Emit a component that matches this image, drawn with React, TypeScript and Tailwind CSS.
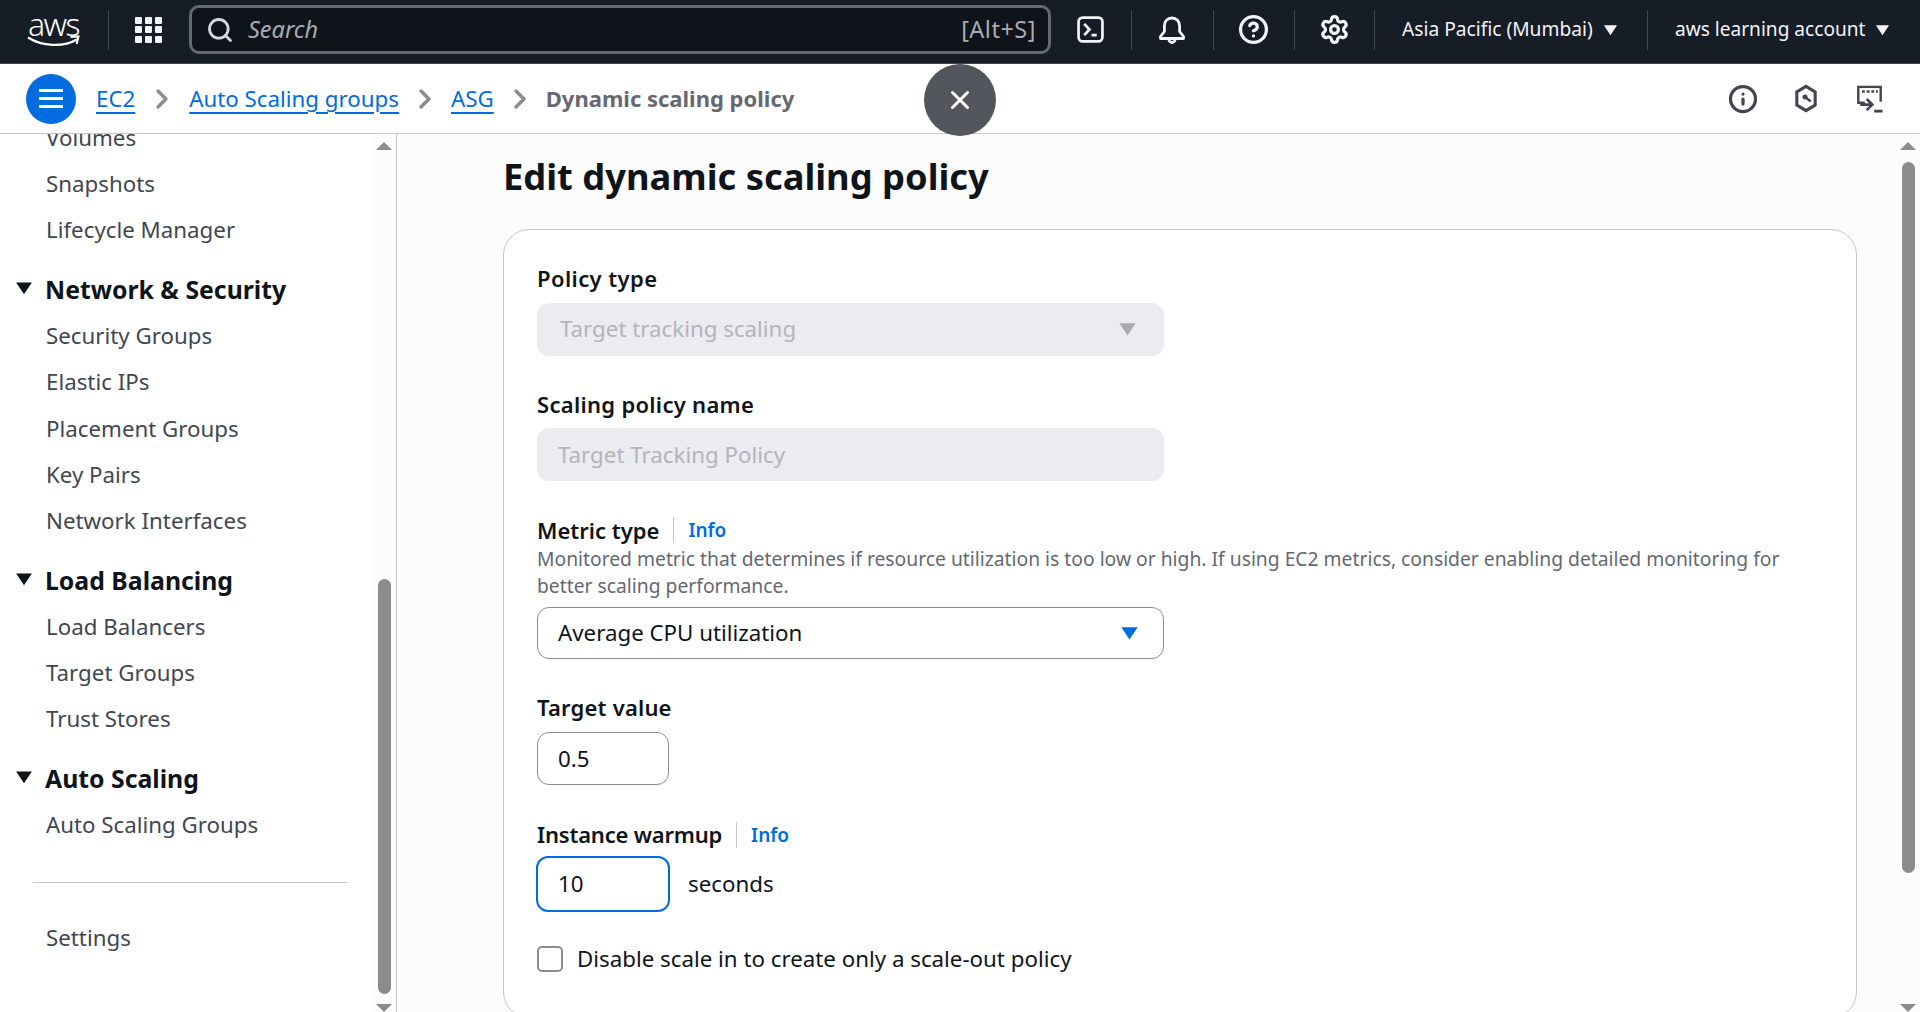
import React from "react";
import { Search, CircleHelp, Settings, Info, ChevronRight, X } from "lucide-react";

const Tri = ({ className }: { className: string }) => (
  <svg viewBox="0 0 16 12" className={className} fill="currentColor"><path d="M1 1h14L8 11.5z" /></svg>
);

const Sep = () => <div className="w-px h-[40px] bg-[#424650] shrink-0" />;

const Crumb = ({ t }: { t: string }) => (
  <a className="text-[#006ce0] underline underline-offset-[5px] decoration-2">{t}</a>
);
const Chev = ({ cls }: { cls: string }) => (
  <ChevronRight size={32} strokeWidth={2.6} className={"text-[#8c8c94] shrink-0 " + cls} />
);

const Item = ({ t, cls = "h-[46px]" }: { t: string; cls?: string }) => (
  <div className={"flex items-center pb-[1px] pl-[46px] text-[#414750] whitespace-nowrap " + cls}>{t}</div>
);
const Head = ({ t }: { t: string }) => (
  <div className="h-[46px] mt-[14px] flex items-center text-[#0f141a] font-bold text-[24.8px] whitespace-nowrap">
    <Tri className="w-[18px] h-[14px] ml-[15px] mr-[12px] mb-[4px] shrink-0" />
    {t}
  </div>
);

const Label = ({ t, cls = "" }: { t: string; cls?: string }) => (
  <div className={"h-[28px] leading-[27px] text-[22px] font-semibold text-[#0f141a] whitespace-nowrap " + cls}>{t}</div>
);
const InfoLink = () => (
  <>
    <span className="w-px h-[26px] bg-[#c6c6cd] mx-[14px]" />
    <span className="text-[#006ce0] text-[19px] font-semibold pt-[1px]">Info</span>
  </>
);

const Bar = ({ thumbTop, thumbH, x }: { thumbTop: string; thumbH: string; x: string }) => (
  <div className={"flex flex-col items-center shrink-0 h-full " + x}>
    <div className="h-0 w-0 mt-[8px] border-x-[8px] border-x-transparent border-b-[8px] border-b-[#8b8b8b]" />
    <div className={"w-[13px] bg-[#8b8b8b] rounded-full " + thumbTop + " " + thumbH} />
    <div className="flex-1" />
    <div className="h-0 w-0 border-x-[8px] border-x-transparent border-t-[8px] border-t-[#8b8b8b]" />
  </div>
);

export default function App() {
  return (
    <div className="relative h-[1012px] w-[1920px] overflow-hidden flex flex-col bg-white text-[22.3px] font-['Noto_Sans',sans-serif]">
      {/* top bar */}
      <header className="h-[64px] shrink-0 bg-[#161d26] border-b border-[#424650] flex items-center pb-[4px] text-white">
        <div className="w-[108px] shrink-0 flex justify-center">
          <div className="relative w-[54px] h-[36px] -ml-[1px] -mt-[2px]">
            <span className="block text-center text-[32px] leading-[26px] tracking-[-1.6px] font-light">aws</span>
            <svg viewBox="0 0 54 14" className="absolute left-0 top-[24px] w-[54px] h-[14px]" fill="none">
              <path d="M1 2.5c14 9 35 10 49 2" stroke="#fff" strokeWidth="2.2" />
              <path d="M43.5 2l8-.6-1.8 7.6" stroke="#fff" strokeWidth="2" />
            </svg>
          </div>
        </div>
        <Sep />
        <div className="ml-[26px] grid grid-cols-3 gap-[2.5px] w-[27px] shrink-0">
          {Array.from({ length: 9 }).map((_, i) => (
            <div key={i} className="w-[7px] h-[7px] bg-[#f3f3f7] rounded-[1px]" />
          ))}
        </div>
        <div className="ml-[27px] w-[862px] h-[49px] shrink-0 rounded-[10px] border-[3px] border-[#656871] bg-[#0f141a] flex items-center pl-[14px] pr-[12px]">
          <Search size={28} strokeWidth={2.4} className="text-[#d5dbdb] shrink-0" />
          <span className="ml-[14px] italic text-[#a8abb2] text-[23.5px]">Search</span>
          <span className="ml-auto text-[#a8abb2] text-[23.5px] tracking-[0.5px]">[Alt+S]</span>
        </div>
        <svg viewBox="0 0 26 26" className="w-[27px] h-[27px] ml-[26px] shrink-0" fill="none" stroke="#f3f3f7" strokeWidth="2.6">
          <rect x="1.5" y="1.5" width="23" height="23" rx="4" />
          <path d="M7 7.5l5 5.5-5 5.5M14 18.5h5" />
        </svg>
        <div className="ml-[27px]"><Sep /></div>
        <svg viewBox="0 0 28 28" className="w-[28px] h-[28px] ml-[26px] shrink-0" fill="none" stroke="#f3f3f7" strokeWidth="2.8" strokeLinejoin="round">
          <path d="M14 2c-4.6 0-7.6 3.4-7.6 8v5.5L2.5 20.5v2h23v-2l-3.9-5V10c0-4.600-3-8-7.600-8z" />
          <path d="M11 23.500a3 3 0 0 0 6 0" />
        </svg>
        <div className="ml-[27px]"><Sep /></div>
        <CircleHelp size={31} strokeWidth={2.5} className="ml-[24px] text-[#f3f3f7] shrink-0" />
        <div className="ml-[25px]"><Sep /></div>
        <Settings size={31} strokeWidth={2.5} className="ml-[24px] text-[#f3f3f7] shrink-0" />
        <div className="ml-[24px]"><Sep /></div>
        <span className="ml-[27px] text-[#f3f3f7] text-[19.2px] whitespace-nowrap w-[193px]">Asia Pacific (Mumbai)</span>
        <Tri className="w-[15px] h-[12px] ml-[8px] text-[#f3f3f7] shrink-0" />
        <div className="ml-[29px]"><Sep /></div>
        <span className="ml-[27px] text-[#f3f3f7] text-[19.1px] whitespace-nowrap w-[191px]">aws learning account</span>
        <Tri className="w-[15px] h-[12px] ml-[9px] text-[#f3f3f7] shrink-0" />
      </header>

      {/* breadcrumb */}
      <div className="h-[70px] shrink-0 bg-white border-b border-[#c6c6cd] flex items-center">
        <div className="ml-[26px] w-[50px] h-[50px] rounded-full bg-[#006ce0] flex flex-col items-center justify-center gap-[5px] shrink-0">
          <span className="w-[24px] h-[3px] bg-white" />
          <span className="w-[24px] h-[3px] bg-white" />
          <span className="w-[24px] h-[3px] bg-white" />
        </div>
        <div className="ml-[20px] flex items-center whitespace-nowrap">
          <Crumb t="EC2" />
          <Chev cls="mx-[11px]" />
          <Crumb t="Auto Scaling groups" />
          <Chev cls="mx-[10px]" />
          <Crumb t="ASG" />
          <Chev cls="mx-[10px]" />
          <span className="font-bold text-[#656871] text-[22px]">Dynamic scaling policy</span>
        </div>
        <div className="ml-auto flex items-center mr-[37px] text-[#424650]">
          <Info size={30} strokeWidth={2.6} />
          <svg viewBox="0 0 26 30" className="w-[26px] h-[29px] ml-[35px]" fill="none" stroke="currentColor" strokeWidth="3.2">
            <path d="M13 2.500l9.500 5.700v13.600L13 27.500 3.500 21.800V8.200z" />
            <circle cx="12" cy="13.500" r="2.600" fill="currentColor" stroke="none" />
            <path d="M12 13.500l6 4.500" strokeWidth="2.600" />
          </svg>
          <svg viewBox="0 0 28 30" className="w-[27px] h-[28px] ml-[37px]" fill="none" stroke="currentColor" strokeWidth="2.6">
            <path d="M9 19H2V2h24v16" />
            <path d="M6 7h3M11 7h3M16 7h3M21 7h2" strokeWidth="2.600" />
            <path d="M11 15l6 6-6 6M4 21h12" strokeWidth="2.800" />
            <path d="M19 28h9" strokeWidth="3" />
          </svg>
        </div>
      </div>

      {/* body */}
      <div className="flex-1 flex min-h-0">
        <aside className="w-[397px] shrink-0 border-r border-[#c6c6cd] flex overflow-hidden">
          <nav className="flex-1 -mt-[19px] min-w-0">
            <Item t="Volumes" />
            <Item t="Snapshots" />
            <Item t="Lifecycle Manager" />
            <Head t="Network & Security" />
            <Item t="Security Groups" />
            <Item t="Elastic IPs" cls="h-[47px]" />
            <Item t="Placement Groups" />
            <Item t="Key Pairs" />
            <Item t="Network Interfaces" />
            <Head t="Load Balancing" />
            <Item t="Load Balancers" />
            <Item t="Target Groups" />
            <Item t="Trust Stores" />
            <Head t="Auto Scaling" />
            <Item t="Auto Scaling Groups" />
            <div className="h-px bg-[#c6c6cd] ml-[33px] mr-[26px] mt-[34px]" />
            <div className="mt-[32px]"><Item t="Settings" /></div>
          </nav>
          <Bar x="w-[23px] bg-[#fcfcfc] pr-[1px]" thumbTop="mt-[429px]" thumbH="h-[415px]" />
        </aside>

        <main className="flex-1 min-w-0 flex bg-[#fcfcfc] overflow-hidden">
          <div className="flex-1 min-w-0 pl-[106px]">
            <h1 className="mt-[18px] h-[48px] leading-[48px] text-[36.3px] font-bold text-[#0f141a] whitespace-nowrap">
              Edit dynamic scaling policy
            </h1>
            <section className="mt-[29px] w-[1354px] h-[789px] bg-white border border-[#c6c6cd] rounded-[26px] pl-[33px] pt-[35px] text-[#0f141a]">
              <Label t="Policy type" cls="tracking-[0.4px]" />
              <div className="mt-[10px] w-[627px] h-[53px] rounded-[12px] bg-[#ebebf0] flex items-center pl-[23px] pr-[27px] pb-[1px] text-[#b4b4bb]">
                <span>Target tracking scaling</span>
                <Tri className="ml-auto w-[19px] h-[14px] text-[#a8a8ae]" />
              </div>

              <Label t="Scaling policy name" cls="mt-[34px] pt-[1px] tracking-[0.3px]" />
              <div className="mt-[10px] w-[627px] h-[53px] rounded-[12px] bg-[#ebebf0] flex items-center pl-[21px] text-[#b4b4bb]">
                Target Tracking Policy
              </div>

              <div className="mt-[35px] flex items-center h-[28px]">
                <Label t="Metric type" cls="pt-[1px]" />
                <InfoLink />
              </div>
              <p className="w-[1270px] text-[19.3px] leading-[27px] text-[#656871] pt-[1px]">
                Monitored metric that determines if resource utilization is too low or high. If using EC2 metrics, consider enabling detailed monitoring for better scaling performance.
              </p>
              <div className="mt-[8px] w-[627px] h-[52px] rounded-[12px] border border-[#8c8c94] flex items-center pl-[20px] pr-[24px] pb-[1px]">
                <span>Average CPU utilization</span>
                <Tri className="ml-auto w-[19px] h-[14px] text-[#006ce0]" />
              </div>

              <Label t="Target value" cls="mt-[35px] tracking-[0.2px]" />
              <div className="mt-[10px] w-[132px] h-[53px] rounded-[12px] border border-[#8c8c94] flex items-center pl-[20px]">0.5</div>

              <div className="mt-[36px] flex items-center h-[28px]">
                <Label t="Instance warmup" cls="tracking-[-0.2px]" />
                <InfoLink />
              </div>
              <div className="mt-[7px] flex items-center -ml-[1px]">
                <div className="w-[134px] h-[56px] rounded-[12px] border-[2.5px] border-[#006ce0] flex items-center pl-[20px]">10</div>
                <span className="ml-[18px]">seconds</span>
              </div>

              <div className="mt-[34px] flex items-center h-[26px]">
                <span className="w-[26px] h-[26px] rounded-[5px] border-2 border-[#8c8c94] shrink-0" />
                <span className="ml-[14px] whitespace-nowrap">Disable scale in to create only a scale-out policy</span>
              </div>
            </section>
          </div>
          <Bar x="w-[24px]" thumbTop="mt-[12px]" thumbH="h-[711px]" />
        </main>
      </div>

      {/* floating close */}
      <div className="absolute left-[924px] top-[64px] w-[72px] h-[72px] rounded-full bg-[#53575d] flex items-center justify-center">
        <X size={30} strokeWidth={2.4} className="text-white" />
      </div>
    </div>
  );
}
